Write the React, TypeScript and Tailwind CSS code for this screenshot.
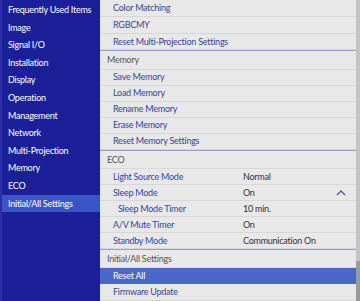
import React from "react";

const leftItems = [
  "Frequently Used Items",
  "Image",
  "Signal I/O",
  "Installation",
  "Display",
  "Operation",
  "Management",
  "Network",
  "Multi-Projection",
  "Memory",
  "ECO",
  "Initial/All Settings",
];

function Row({
  label,
  value,
  h = "h-[16px]",
  sub = false,
  selected = false,
  chevron = false,
}: {
  label: string;
  value?: string;
  h?: string;
  sub?: boolean;
  selected?: boolean;
  chevron?: boolean;
}) {
  return (
    <div
      className={`${h} flex items-center border-b ${
        selected
          ? "bg-[#4a67c8] border-[#4a67c8] text-white"
          : "border-[#d7d7d7] text-[#35459a]"
      } ${sub ? "pl-[18px]" : "pl-[13px]"} relative`}
    >
      <span className={`${sub ? "w-[125px]" : "w-[130px]"} shrink-0 whitespace-nowrap`}>{label}</span>
      {value && <span className="text-[#333] whitespace-nowrap">{value}</span>}
      {chevron && (
        <svg
          className="absolute right-[10px] top-[4px]"
          width="10"
          height="7"
          viewBox="0 0 10 7"
        >
          <path d="M1 6 L5 2 L9 6" stroke="#4a5aa8" strokeWidth="1.4" fill="none" />
        </svg>
      )}
    </div>
  );
}

function Header({ label, h = "h-[20px]" }: { label: string; h?: string }) {
  return (
    <div
      className={`${h} flex items-center pl-[7px] text-[#555] border-t border-t-[#9a9ad2] border-b border-b-[#d7d7d7]`}
    >
      {label}
    </div>
  );
}

export default function App() {
  return (
    <div
      className="w-[360px] h-[301px] flex overflow-hidden text-[9px] tracking-[-0.25px] bg-[#1b2098]"
      style={{ fontFamily: 'Lato, "Noto Sans", sans-serif' }}
    >
      <div className="w-[100px] shrink-0 bg-[#1b2098] pt-[1px] border-l-[2px] border-[#2a2fa8]">
        {leftItems.map((it) => (
          <div
            key={it}
            className={`h-[17.6px] flex items-center pl-[6px] whitespace-nowrap text-white ${
              it === "Initial/All Settings" ? "bg-[#3a55c5]" : ""
            }`}
          >
            {it}
          </div>
        ))}
      </div>
      <div className="flex-1 flex bg-[#e8e8e8]">
        <div className="flex-1 flex flex-col">
          <Row label="Color Matching" h="h-[17px]" />
          <Row label="RGBCMY" h="h-[17px]" />
          <Row label="Reset Multi-Projection Settings" h="h-[16px]" />
          <Header label="Memory" />
          <Row label="Save Memory" />
          <Row label="Load Memory" />
          <Row label="Rename Memory" />
          <Row label="Erase Memory" />
          <Row label="Reset Memory Settings" />
          <Header label="ECO" />
          <Row label="Light Source Mode" value="Normal" />
          <Row label="Sleep Mode" value="On" chevron />
          <Row label="Sleep Mode Timer" value="10 min." sub />
          <Row label="A/V Mute Timer" value="On" />
          <Row label="Standby Mode" value="Communication On" />
          <Header label="Initial/All Settings" h="h-[19px]" />
          <Row label="Reset All" selected />
          <Row label="Firmware Update" h="h-[17px]" />
        </div>
        <div className="w-[4px] flex flex-col bg-[#c4c4c4]">
          <div className="flex-1" />
          <div className="h-[40px] bg-[#9a9a9a]" />
        </div>
      </div>
    </div>
  );
}
